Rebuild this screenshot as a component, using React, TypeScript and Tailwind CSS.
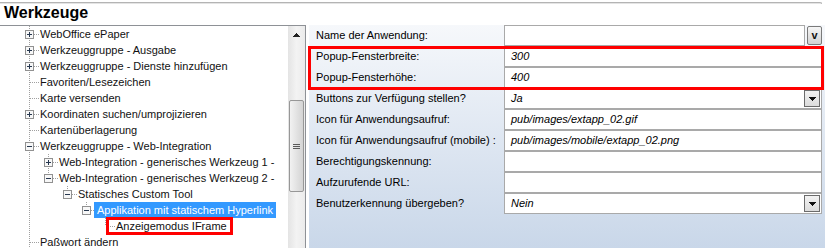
import React from 'react'

type TreeItem = {
  label: string
  level: number
  kind: 'plus' | 'minus' | 'leaf'
  cont: boolean[] // Linien der Vorfahren, die weiterlaufen
  next: boolean // weitere Geschwister darunter
  selected?: boolean
  marked?: boolean
}

const tree: TreeItem[] = [
  { label: 'WebOffice ePaper', level: 0, kind: 'plus', cont: [], next: true },
  { label: 'Werkzeuggruppe - Ausgabe', level: 0, kind: 'plus', cont: [], next: true },
  { label: 'Werkzeuggruppe - Dienste hinzufügen', level: 0, kind: 'plus', cont: [], next: true },
  { label: 'Favoriten/Lesezeichen', level: 0, kind: 'leaf', cont: [], next: true },
  { label: 'Karte versenden', level: 0, kind: 'leaf', cont: [], next: true },
  { label: 'Koordinaten suchen/umprojizieren', level: 0, kind: 'plus', cont: [], next: true },
  { label: 'Kartenüberlagerung', level: 0, kind: 'leaf', cont: [], next: true },
  { label: 'Werkzeuggruppe - Web-Integration', level: 0, kind: 'minus', cont: [], next: true },
  { label: 'Web-Integration - generisches Werkzeug 1 -', level: 1, kind: 'plus', cont: [true], next: true },
  { label: 'Web-Integration - generisches Werkzeug 2 -', level: 1, kind: 'minus', cont: [true], next: false },
  { label: 'Statisches Custom Tool', level: 2, kind: 'minus', cont: [true, false], next: false },
  { label: 'Applikation mit statischem Hyperlink', level: 3, kind: 'minus', cont: [true, false, false], next: false, selected: true },
  { label: 'Anzeigemodus IFrame', level: 4, kind: 'leaf', cont: [true, false, false, false], next: false, marked: true },
  { label: 'Paßwort ändern', level: 0, kind: 'leaf', cont: [], next: true },
]

type PropRow = { label: string; value: string; kind?: 'combo' | 'select' }

const props: PropRow[] = [
  { label: 'Name der Anwendung:', value: '', kind: 'combo' },
  { label: 'Popup-Fensterbreite:', value: '300' },
  { label: 'Popup-Fensterhöhe:', value: '400' },
  { label: 'Buttons zur Verfügung stellen?', value: 'Ja', kind: 'select' },
  { label: 'Icon für Anwendungsaufruf:', value: 'pub/images/extapp_02.gif' },
  { label: 'Icon für Anwendungsaufruf (mobile) :', value: 'pub/images/mobile/extapp_02.png' },
  { label: 'Berechtigungskennung:', value: '' },
  { label: 'Aufzurufende URL:', value: '' },
  { label: 'Benutzerkennung übergeben?', value: 'Nein', kind: 'select' },
]

const LINE = '#a0a0a0'

// Linie eines Vorfahren (durchgehend oder leer)
function Guide({ on }: { on: boolean }) {
  return (
    <svg width="19" height="16" viewBox="0 0 19 16" shapeRendering="crispEdges" className="shrink-0">
      {on && <line x1="9.5" y1="0" x2="9.5" y2="16" stroke={LINE} strokeDasharray="1 1" />}
    </svg>
  )
}

// Verbinder mit +/- Kästchen
function Connector({ kind, next }: { kind: TreeItem['kind']; next: boolean }) {
  return (
    <svg width="19" height="16" viewBox="0 0 19 16" shapeRendering="crispEdges" className="shrink-0">
      <line x1="9.5" y1="0" x2="9.5" y2={next ? 16 : 8} stroke={LINE} strokeDasharray="1 1" />
      <line x1="10" y1="8.5" x2="19" y2="8.5" stroke={LINE} strokeDasharray="1 1" />
      {kind !== 'leaf' && (
        <>
          <rect x="5.5" y="4.5" width="8" height="8" fill="#f7f7f7" stroke="#919191" />
          <line x1="7" y1="8.5" x2="12" y2="8.5" stroke="#26374f" />
          {kind === 'plus' && <line x1="9.5" y1="6" x2="9.5" y2="11" stroke="#26374f" />}
        </>
      )}
    </svg>
  )
}

function TreeRow({ item }: { item: TreeItem }) {
  return (
    <div className="relative flex h-[16px] items-center pl-[20px]">
      {item.cont.map((on, i) => (
        <Guide key={i} on={on} />
      ))}
      <Connector kind={item.kind} next={item.next} />
      <span
        className={`-ml-[2px] px-[3px] leading-[16px] whitespace-nowrap ${
          item.selected ? 'bg-[#3399ff] text-white' : 'text-[#111]'
        }`}
      >
        {item.label}
      </span>
      {item.marked && (
        <div className="absolute left-[106px] top-[-1px] h-[18px] w-[127px] border-[3px] border-[#ff0000]" />
      )}
    </div>
  )
}

function Scrollbar() {
  return (
    <div className="flex w-[17px] shrink-0 flex-col bg-linear-to-r from-[#e4e4e4] via-[#f3f3f3] to-[#ebebeb]">
      {/* Pfeil nach oben */}
      <div className="flex h-[17px] items-center justify-center">
        <svg width="7" height="4" viewBox="0 0 7 4" shapeRendering="crispEdges">
          <path d="M3.5 0L7 4H0z" fill="#222" />
        </svg>
      </div>
      <div className="mx-[1px] mt-[57px] flex h-[92px] items-center justify-center rounded-[2px] border border-[#979797] bg-linear-to-r from-[#f2f2f2] to-[#d4d4d4]">
        <div className="flex w-[7px] flex-col gap-[1px]">
          <div className="h-[1px] bg-[#5a5a5a]" />
          <div className="h-[1px] bg-[#5a5a5a]" />
          <div className="h-[1px] bg-[#5a5a5a]" />
        </div>
      </div>
    </div>
  )
}

function SelectArrow() {
  return (
    <div className="flex h-[17px] w-[16px] shrink-0 items-center justify-center border border-[#6b6b6b] bg-linear-to-b from-[#f2f2f2] to-[#dcdcdc]">
      <svg width="7" height="4" viewBox="0 0 7 4" shapeRendering="crispEdges">
        <path d="M0 0H7L3.5 4z" fill="#111" />
      </svg>
    </div>
  )
}

function PropertyRow({ row }: { row: PropRow }) {
  return (
    <div className="flex h-[21px]">
      <div className="flex w-[195px] shrink-0 items-center pl-[7px] whitespace-nowrap">{row.label}</div>
      {row.kind === 'combo' ? (
        <div className="flex flex-1 gap-[2px]">
          <div className="flex-1 border border-[#a9a9a9] bg-white" />
          <div className="mt-[1px] flex h-[19px] w-[15px] items-center justify-center rounded-[2px] border border-[#7a7a7a] bg-linear-to-b from-[#f6f6f6] to-[#d2d2d2] text-[11px] leading-none font-bold text-[#111]">
            v
          </div>
        </div>
      ) : (
        <div className="flex flex-1 items-center border border-[#a9a9a9] bg-white pr-[1px] pl-[6px] italic">
          <span className="flex-1 whitespace-nowrap">{row.value}</span>
          {row.kind === 'select' && <SelectArrow />}
        </div>
      )}
    </div>
  )
}

export default function App() {
  return (
    <div className="h-[248px] w-[825px] overflow-hidden bg-white text-[11px] text-black font-['Liberation_Sans',Arial,sans-serif]">
      {/* Rahmen oben */}
      <div className="h-[4px] pt-[2px] pr-[3px]">
        <div className="h-[2px] rounded-tr-[3px] border-t border-r border-[#b4b4b4] bg-[#e4e4e4]" />
      </div>

      <div className="h-[21px] pl-[4px] text-[16px] leading-[17px] font-bold">Werkzeuge</div>

      <div className="flex h-[223px]">
        {/* Baum */}
        <div className="flex w-[306px] shrink-0 border-t border-r border-[#8e9196]">
          <div className="flex-1 overflow-hidden">
            {tree.map((item, i) => (
              <TreeRow key={i} item={item} />
            ))}
          </div>
          <Scrollbar />
        </div>

        <div className="w-[3px] shrink-0" />

        {/* Eigenschaften */}
        <div className="relative flex-1 bg-linear-to-b from-[#f6f8fb] to-[#c9d7e9] pr-[3px]">
          {props.map((row, i) => (
            <PropertyRow key={i} row={row} />
          ))}
          <div className="absolute left-[-1px] top-[21px] h-[44px] w-[516px] border-[3px] border-[#ff0000]" />
        </div>
      </div>
    </div>
  )
}
